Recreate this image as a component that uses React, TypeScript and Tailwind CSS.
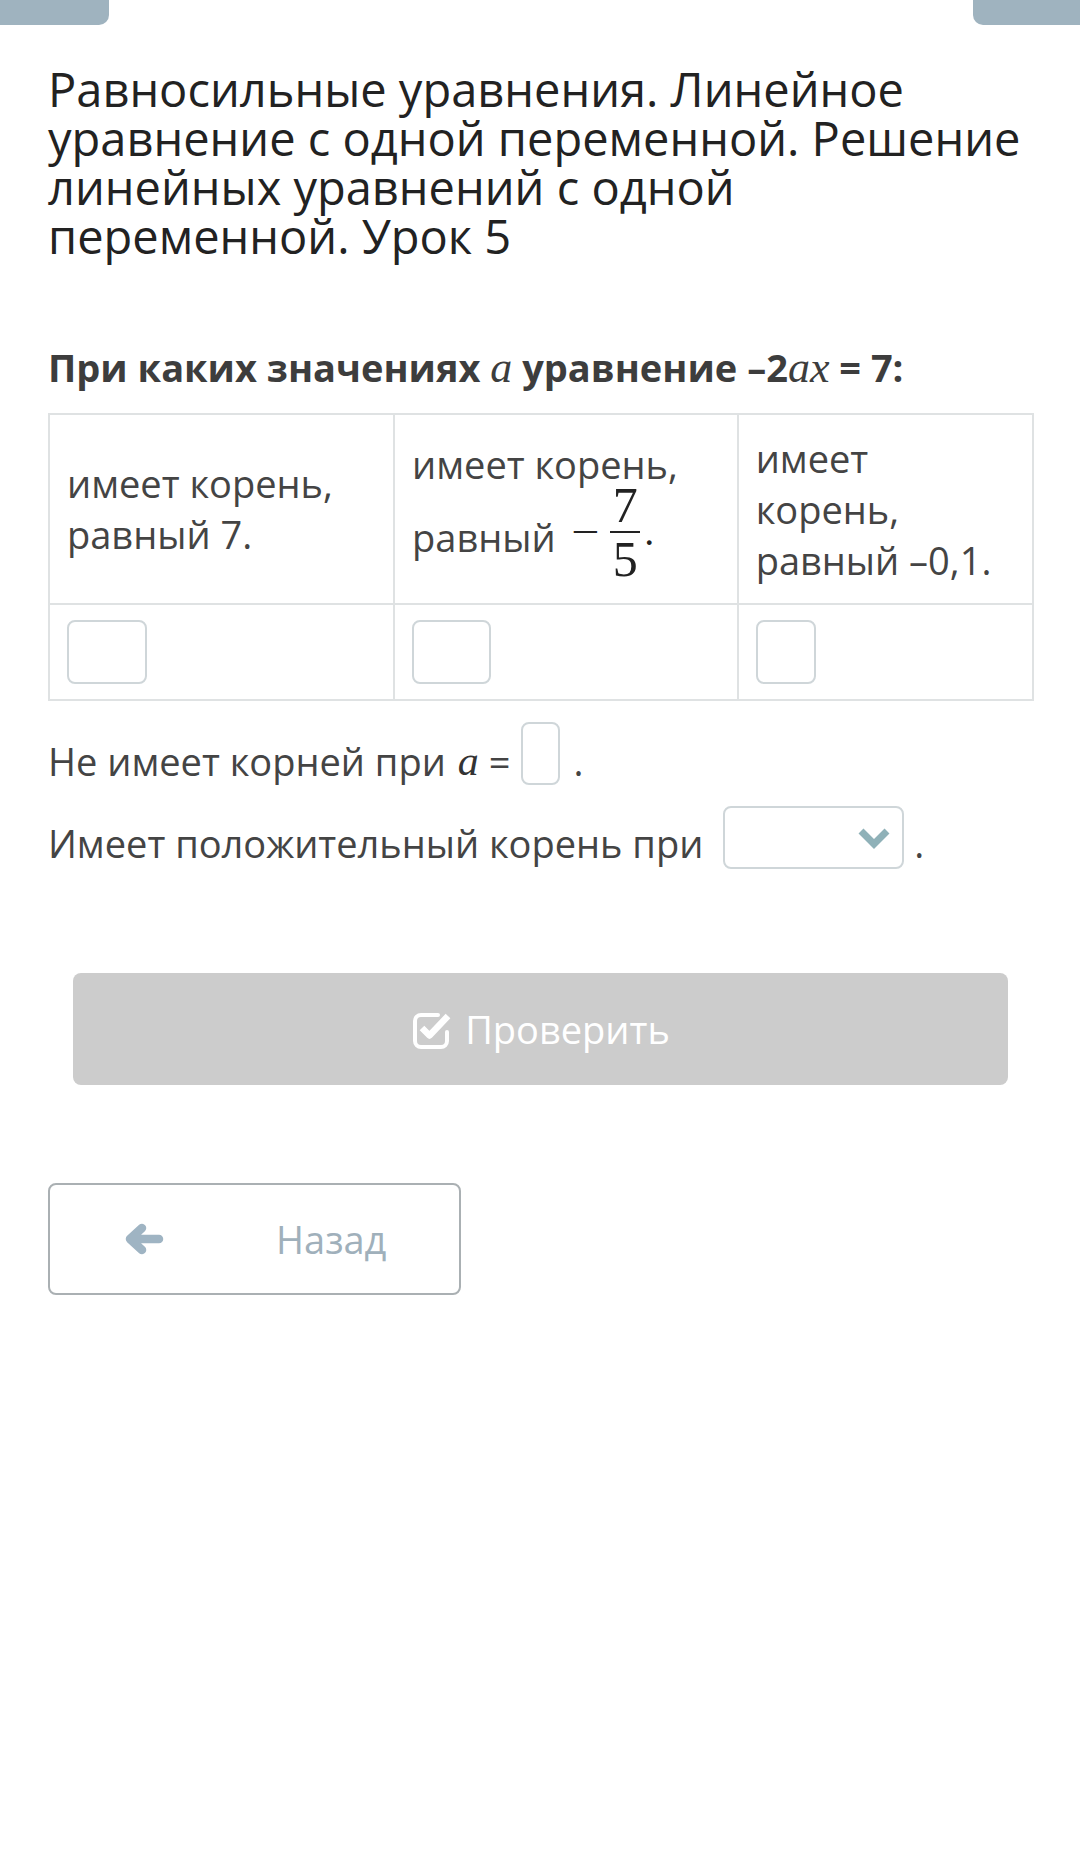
const sans = "font-['Open_Sans','Noto_Sans',sans-serif]"
const serif = "font-['Liberation_Serif','DejaVu_Serif',serif]"

function CheckIcon() {
  return (
    <svg width="42" height="40" viewBox="0 0 42 40" fill="none">
      <path
        d="M27 6H10a6 6 0 0 0-6 6v20a6 6 0 0 0 6 6h20a6 6 0 0 0 6-6v-9"
        stroke="white"
        strokeWidth="4"
        strokeLinecap="round"
      />
      <path d="M11 19l7.5 7.5L37 7" stroke="white" strokeWidth="6.5" strokeLinejoin="round" />
    </svg>
  )
}

function ArrowIcon() {
  return (
    <svg width="40" height="32" viewBox="0 0 40 32" fill="none">
      <path
        d="M35 16H8M18 5L6 16l12 11"
        stroke="#9fb4c3"
        strokeWidth="8.5"
        strokeLinecap="round"
        strokeLinejoin="round"
      />
    </svg>
  )
}

function Chevron() {
  return (
    <svg width="36" height="24" viewBox="0 0 36 24" fill="none">
      <path d="M5 5l13 13L31 5" stroke="#8fb1b8" strokeWidth="7" />
    </svg>
  )
}

function Box({ w }: { w: string }) {
  return <div className={`${w} h-[64px] rounded-[8px] border-2 border-[#cfd6d9] bg-white`} />
}

function Fraction() {
  return (
    <span className={`${serif} ml-[18px] inline-flex items-center text-[#222]`}>
      <span className="scale-x-125 text-[40px]">−</span>
      <span className="ml-[14px] inline-flex flex-col items-center text-[50px] leading-[46px]">
        <span>7</span>
        <span className="my-[3px] block h-[2px] w-[30px] bg-[#222]" />
        <span>5</span>
      </span>
      <span className="ml-[4px] text-[40px]">.</span>
    </span>
  )
}

export default function App() {
  return (
    <div className={`${sans} relative min-h-[1872px] w-[1080px] bg-white`}>
      <div className="flex justify-between">
        <div className="h-[25px] w-[109px] rounded-br-[10px] bg-[#9fb3bf]" />
        <div className="h-[25px] w-[107px] rounded-bl-[10px] bg-[#9fb3bf]" />
      </div>

      <div className="px-12">
        <h1 className="mt-[40px] text-[47px] leading-[49px] text-[#222]">
          Равносильные уравнения. Линейное
          <br />
          уравнение с одной переменной. Решение
          <br />
          линейных уравнений с одной
          <br />
          переменной. Урок 5
        </h1>

        <p className="mt-[83px] text-[38px] font-bold leading-[46px] text-[#3d3d3d]">
          При каких значениях <i className={`${serif} font-normal text-[44px]`}>a</i> уравнение –2
          <i className={`${serif} font-normal text-[44px]`}>ax</i> = 7:
        </p>

        <table className="mt-[22px] w-[986px] border-collapse text-[38px] leading-[51px] text-[#444]">
          <colgroup>
            <col className="w-[346px]" />
            <col className="w-[344px]" />
            <col className="w-[296px]" />
          </colgroup>
          <tbody>
            <tr className="h-[190px]">
              <td className="border-2 border-[#dfe2e3] px-[17px] align-middle">
                имеет корень,
                <br />
                равный 7.
              </td>
              <td className="border-2 border-[#dfe2e3] px-[17px] align-middle">
                <div className="-mb-[8px] pt-[2px]">имеет корень,</div>
                <div className="flex items-center">
                  <span className="relative top-[6px]">равный</span>
                  <Fraction />
                </div>
              </td>
              <td className="border-2 border-[#dfe2e3] px-[17px] align-middle">
                имеет
                <br />
                корень,
                <br />
                равный –0,1.
              </td>
            </tr>
            <tr className="h-[96px]">
              <td className="border-2 border-[#dfe2e3] px-[17px] align-middle">
                <Box w="w-[80px]" />
              </td>
              <td className="border-2 border-[#dfe2e3] px-[17px] align-middle">
                <Box w="w-[79px]" />
              </td>
              <td className="border-2 border-[#dfe2e3] px-[17px] align-middle">
                <Box w="w-[60px]" />
              </td>
            </tr>
          </tbody>
        </table>

        <div className="mt-[21px] flex items-center text-[38px] text-[#444]">
          <span className="relative top-[8px]">Не имеет корней при</span>
          <i className={`${serif} relative top-[8px] ml-[12px] text-[42px] text-[#333]`}>a</i>
          <span className="relative top-[8px] ml-[10px]">=</span>
          <div className="ml-[10px] h-[63px] w-[39px] rounded-[8px] border-2 border-[#cfd6d9]" />
          <span className="relative top-[8px] ml-[14px]">.</span>
        </div>

        <div className="mt-[21px] flex items-center text-[38px] text-[#444]">
          <span className="relative top-[6px]">Имеет положительный корень при</span>
          <div className="ml-[20px] flex h-[63px] w-[181px] items-center justify-end rounded-[8px] border-2 border-[#cfd6d9] pr-[10px]">
            <Chevron />
          </div>
          <span className="relative top-[6px] ml-[10px]">.</span>
        </div>

        <button className="mx-[25px] mt-[104px] flex h-[112px] w-[935px] items-center justify-center gap-[12px] rounded-[8px] bg-[#cccccc] text-[38px] text-white">
          <CheckIcon />
          <span>Проверить</span>
        </button>

        <button className="mt-[98px] flex h-[112px] w-[413px] items-center rounded-[8px] border-2 border-[#aab0b3] bg-white text-[38px] text-[#a0b0bb]">
          <span className="ml-[74px] flex">
            <ArrowIcon />
          </span>
          <span className="ml-[112px]">Назад</span>
        </button>
      </div>
    </div>
  )
}
